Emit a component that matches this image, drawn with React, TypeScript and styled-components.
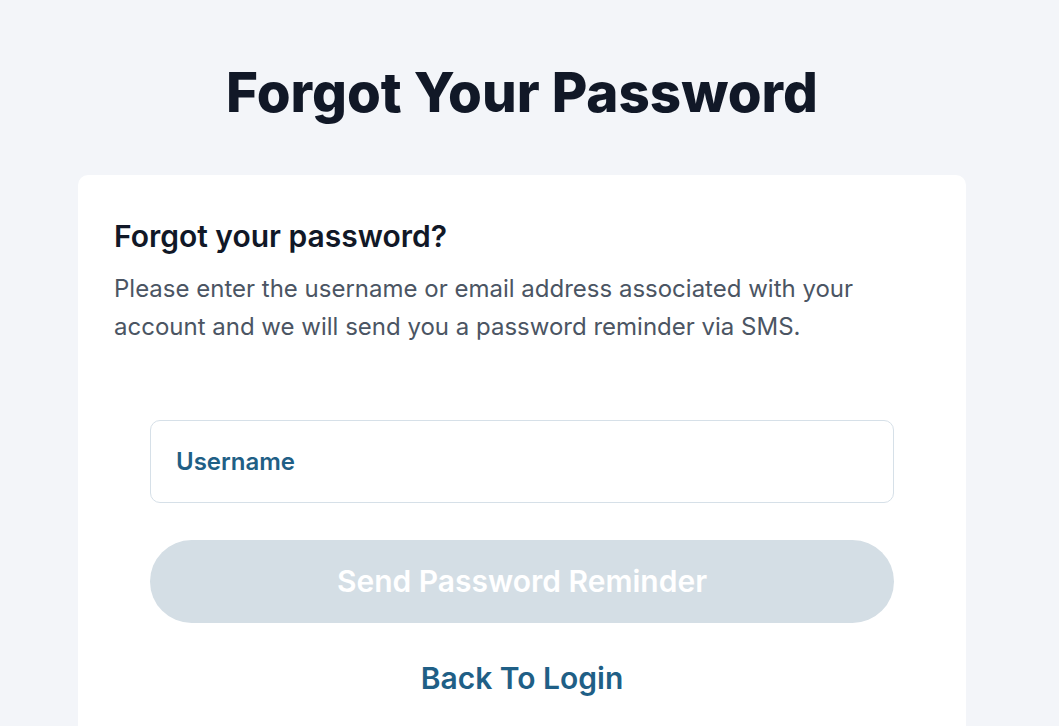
import React from "react";
import styled, { createGlobalStyle } from "styled-components";

const Global = createGlobalStyle`
  html, body { margin: 0; padding: 0; background: #f3f5f9; }
  body { font-family: Inter, "Noto Sans", sans-serif; -webkit-font-smoothing: antialiased; }
  * { box-sizing: border-box; }
`;

const Page = styled.div`
  display: flex;
  flex-direction: column;
  align-items: center;
  padding: 59px 15px 40px 0;
  min-height: 900px;
`;

const Title = styled.h1`
  margin: 0;
  font-size: 54.7px;
  line-height: 66px;
  font-weight: 800;
  color: #111827;
`;

const Card = styled.div`
  margin-top: 50px;
  width: 888px;
  background: #ffffff;
  border-radius: 10px;
  padding: 43px 36px 60px;
`;

const Heading = styled.h2`
  margin: 0;
  font-size: 30px;
  line-height: 36px;
  font-weight: 600;
  color: #111827;
`;

const Description = styled.p`
  margin: 15.5px 0 0;
  font-size: 24px;
  line-height: 38px;
  color: #4b5563;
`;

const Form = styled.form`
  display: flex;
  flex-direction: column;
  padding: 0 36px;
  margin-top: 74px;
`;

const Input = styled.input`
  height: 83px;
  border: 1px solid #d6e0e8;
  border-radius: 10px;
  padding: 0 25px;
  font-family: inherit;
  font-size: 24px;
  font-weight: 600;
  color: #1f5f86;
  background: #fff;
  outline: none;
  &::placeholder { color: #1f5f86; opacity: 1; }
`;

const SubmitButton = styled.button`
  margin-top: 37px;
  height: 83px;
  border: none;
  border-radius: 42px;
  background: #d4dee5;
  color: #ffffff;
  font-family: inherit;
  font-size: 30px;
  font-weight: 600;
  cursor: not-allowed;
`;

const BackLink = styled.a`
  margin-top: 37px;
  align-self: center;
  font-size: 30px;
  line-height: 36px;
  font-weight: 600;
  color: #1f5f86;
  text-decoration: none;
`;

export default function App() {
  return (
    <>
      <Global />
      <Page>
        <Title>Forgot Your Password</Title>
        <Card>
          <Heading>Forgot your password?</Heading>
          <Description>
            Please enter the username or email address associated with your
            account and we will send you a password reminder via SMS.
          </Description>
          <Form onSubmit={(e) => e.preventDefault()}>
            <Input placeholder="Username" />
            <SubmitButton type="submit" disabled>Send Password Reminder</SubmitButton>
            <BackLink href="#">Back To Login</BackLink>
          </Form>
        </Card>
      </Page>
    </>
  );
}
